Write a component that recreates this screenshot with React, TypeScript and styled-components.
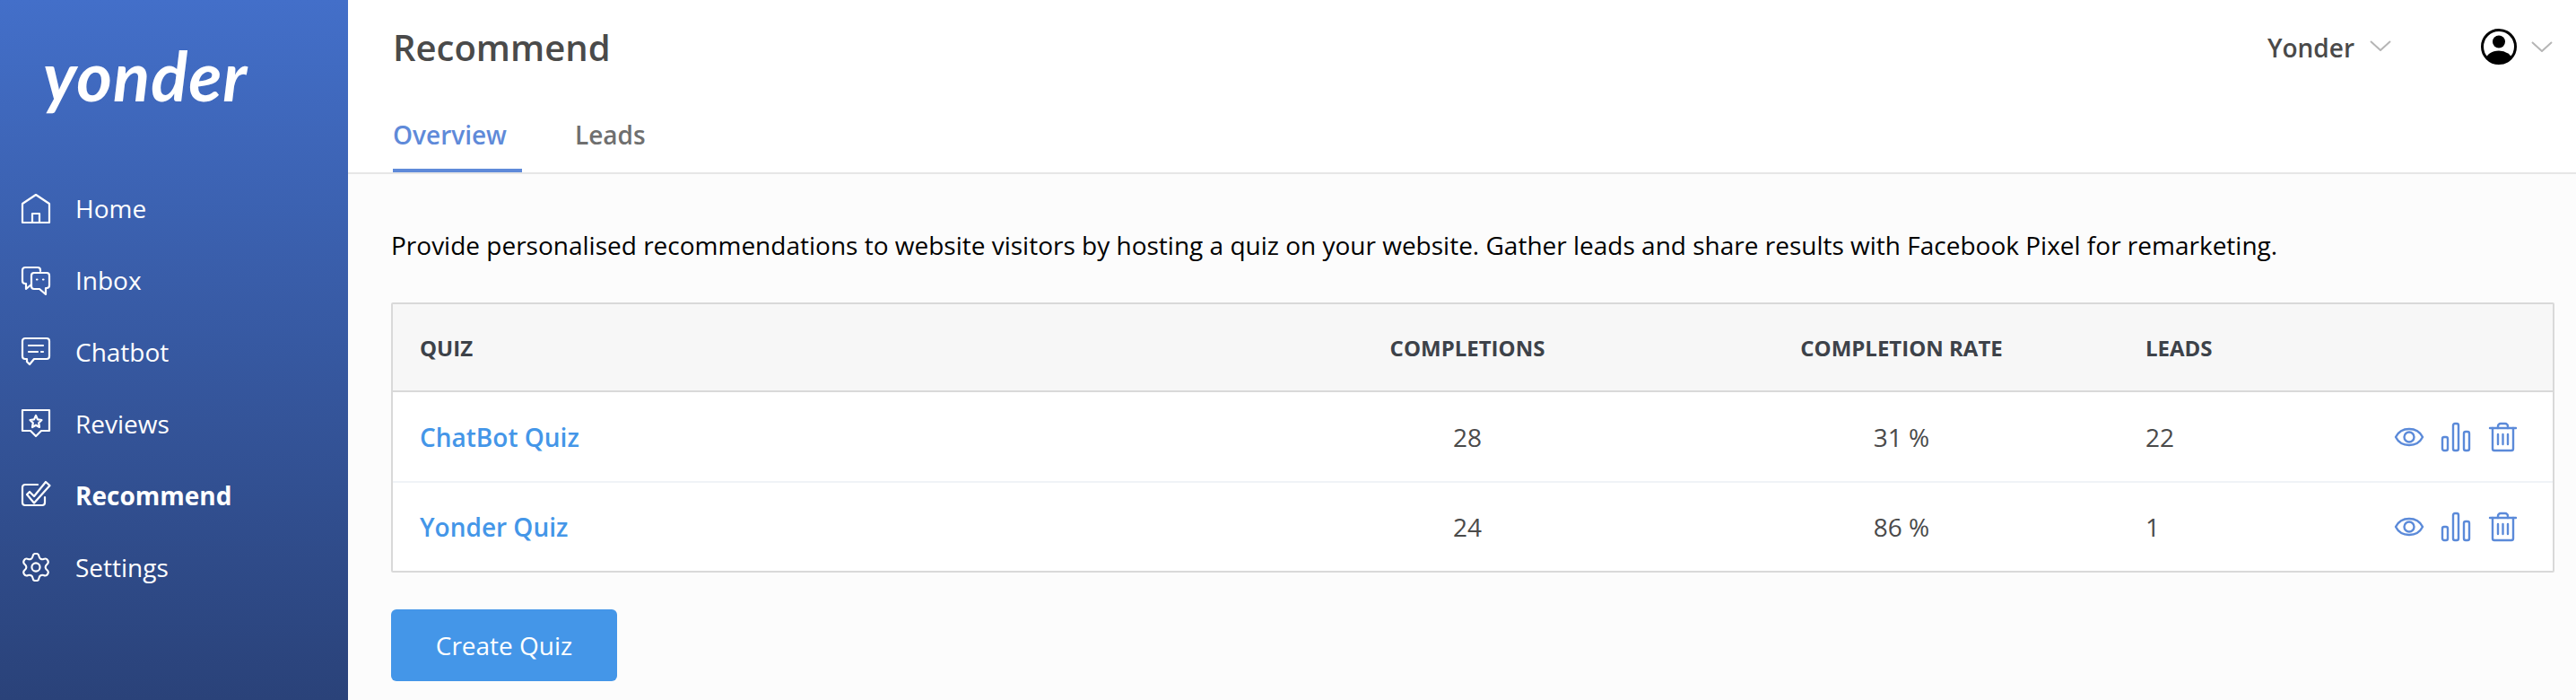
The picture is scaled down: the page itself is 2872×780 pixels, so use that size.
import React from 'react';
import styled, { createGlobalStyle } from 'styled-components';
import { Settings } from 'lucide-react';

const GlobalStyle = createGlobalStyle`
  html, body {
    margin: 0;
    padding: 0;
    font-family: "Open Sans", "Noto Sans", sans-serif;
    background: #fcfcfc;
  }
`;

const Layout = styled.div`
  display: flex;
  width: 100%;
  height: 100vh;
  overflow: hidden;
`;

const Sidebar = styled.aside`
  width: 388px;
  flex-shrink: 0;
  display: flex;
  flex-direction: column;
  background: linear-gradient(180deg, #436fc9 0%, #2a4279 100%);
`;

const Logo = styled.div`
  height: 192px;
  padding: 34px 0 0 48px;
  box-sizing: border-box;
  font-family: "Lato", "Open Sans", sans-serif;
  font-size: 76px;
  line-height: 100px;
  font-weight: 700;
  font-style: italic;
  letter-spacing: 1px;
  color: #fff;
`;

const Nav = styled.nav`
  display: flex;
  flex-direction: column;
`;

const NavItem = styled.a<{ $active?: boolean }>`
  height: 80px;
  display: flex;
  align-items: center;
  gap: 28px;
  padding-left: 24px;
  font-size: 28px;
  font-weight: ${(p) => (p.$active ? 700 : 400)};
  color: #fff;
`;

const NavIcon = styled.svg`
  width: 32px;
  height: 32px;
  flex-shrink: 0;
  fill: none;
  stroke: #fff;
  stroke-width: 2.2;
  stroke-linejoin: round;
  stroke-linecap: round;
  overflow: visible;
`;

const Main = styled.main`
  flex: 1;
  min-width: 0;
  display: flex;
  flex-direction: column;
`;

const Header = styled.header`
  height: 194px;
  box-sizing: border-box;
  background: #fff;
  border-bottom: 2px solid #e6e6e6;
  display: flex;
  flex-direction: column;
  justify-content: space-between;
`;

const TopRow = styled.div`
  display: flex;
  align-items: flex-start;
  justify-content: space-between;
  padding: 26px 26px 0 50px;
`;

const Title = styled.h1`
  margin: 0;
  font-size: 40px;
  line-height: 54px;
  font-weight: 600;
  color: #4a4a4a;
`;

const HeaderTools = styled.div`
  display: flex;
  align-items: center;
  height: 54px;
  margin-top: -1px;
`;

const OrgName = styled.span`
  font-size: 28px;
  font-weight: 600;
  color: #4a4a4a;
  margin-right: 17px;
  padding-top: 2px;
`;

const Chevron = styled.svg`
  width: 24px;
  height: 12px;
  fill: none;
  stroke: #b5b5b5;
  stroke-width: 2;
`;

const OrgChevron = styled(Chevron)`
  margin-right: 100px;
  margin-top: -2px;
`;

const UserIcon = styled.svg`
  width: 40px;
  height: 40px;
  margin-right: 16px;
`;

const Tabs = styled.div`
  display: flex;
  padding-left: 50px;
`;

const Tab = styled.a<{ $active?: boolean }>`
  height: 68px;
  box-sizing: border-box;
  padding: 6px 17px 0 0;
  margin-right: 43px;
  font-size: 28px;
  line-height: 40px;
  font-weight: 600;
  color: ${(p) => (p.$active ? '#5f8ad9' : '#6f6f6f')};
  border-bottom: 4px solid ${(p) => (p.$active ? '#5f8ad9' : 'transparent')};

  &:first-child {
    margin-right: 59px;
  }
`;

const Content = styled.div`
  flex: 1;
  padding: 60px 24px 0 48px;
  background: #fcfcfc;
`;

const Description = styled.p`
  margin: 0 0 45px;
  font-size: 28px;
  line-height: 38px;
  color: #000;
  white-space: nowrap;
`;

const Table = styled.div`
  border: 2px solid #d9d9d9;
  border-radius: 2px;
  background: #fff;
`;

const columns = '942px 512px 456px 118px 1fr';

const HeadRow = styled.div`
  display: grid;
  grid-template-columns: ${columns};
  align-items: center;
  box-sizing: border-box;
  height: 98px;
  background: #f7f7f7;
  border-bottom: 2px solid #d9d9d9;
  font-size: 24px;
  font-weight: 700;
  color: #3d4249;
  text-transform: uppercase;
`;

const Row = styled.div`
  display: grid;
  grid-template-columns: ${columns};
  align-items: center;
  box-sizing: border-box;
  height: 99px;
  font-size: 28px;
  color: #4a4a4a;

  & + & {
    border-top: 2px solid #f0f3f7;
    height: 100px;
  }
`;

const Cell = styled.div<{ $first?: boolean }>`
  text-align: ${(p) => (p.$first ? 'left' : 'center')};
  padding-left: ${(p) => (p.$first ? '30px' : '0')};
  white-space: nowrap;
`;

const LeadsCell = styled.div`
  padding-left: 44px;
  white-space: nowrap;
`;

const QuizLink = styled.a`
  font-weight: 600;
  color: #4496e8;
`;

const Actions = styled.div`
  display: flex;
  justify-content: flex-end;
  align-items: center;
  gap: 20px;
  padding-right: 40px;
`;

const ActionIcon = styled.svg`
  width: 32px;
  height: 32px;
  fill: none;
  stroke: #5b8ad9;
  stroke-width: 2.4;
  stroke-linecap: round;
  stroke-linejoin: round;
  overflow: visible;
`;

const CreateButton = styled.button`
  display: block;
  margin-top: 41px;
  width: 252px;
  height: 80px;
  border: 0;
  border-radius: 6px;
  background: #4496e8;
  color: #fff;
  font-family: inherit;
  font-size: 28px;
`;

const navItems = [
  {
    label: 'Home',
    icon: (
      <NavIcon viewBox="0 0 32 32">
        <path d="M1 11 L16 1 L31 11 V32 H1 Z" />
        <path d="M12 32 V22 H20 V32" />
      </NavIcon>
    ),
  },
  {
    label: 'Inbox',
    icon: (
      <NavIcon viewBox="0 0 32 32">
        <path d="M21 6 V5 a3 3 0 0 0 -3 -3 H4 a3 3 0 0 0 -3 3 v12 a3 3 0 0 0 3 3 h1 v6 l6 -5" />
        <path d="M14 8 H28 a3 3 0 0 1 3 3 v11 a3 3 0 0 1 -3 3 h-1 v7 l-7 -6 h-6 a3 3 0 0 1 -3 -3 V11 a3 3 0 0 1 3 -3 Z" />
        <path d="M17 15.5 h.5 M24 15.5 h.5" />
      </NavIcon>
    ),
  },
  {
    label: 'Chatbot',
    icon: (
      <NavIcon viewBox="0 0 32 32">
        <path d="M4 1 H28 a3 3 0 0 1 3 3 V21 a3 3 0 0 1 -3 3 H14 L9 30 L6 27 V24 H4 a3 3 0 0 1 -3 -3 V4 a3 3 0 0 1 3 -3 Z" />
        <path d="M8 9 H24 M8 16 H18 M22 16 H24" />
      </NavIcon>
    ),
  },
  {
    label: 'Reviews',
    icon: (
      <NavIcon viewBox="0 0 32 32">
        <path d="M1 1 H31 V24 H22 L16 30 L10 24 H1 Z" />
        <path d="M16 7 L18 11.4 L22.5 12 L19.2 15.2 L20 20 L16 17.7 L12 20 L12.8 15.2 L9.5 12 L14 11.4 Z" />
      </NavIcon>
    ),
  },
  {
    label: 'Recommend',
    active: true,
    icon: (
      <NavIcon viewBox="0 0 32 32">
        <path d="M18 4 H4 a3 3 0 0 0 -3 3 V24 a3 3 0 0 0 3 3 H23 a3 3 0 0 0 3 -3 V18" />
        <path d="M6 15 L9 12 L14 17 L27 1 L31.5 5 L14 24.5 Z" />
      </NavIcon>
    ),
  },
  { label: 'Settings', icon: <Settings size={32} viewBox="1.5 1.5 21 21" strokeWidth={1.4} color="#fff" /> },
];

const quizzes = [
  { name: 'ChatBot Quiz', completions: 28, rate: '31 %', leads: 22 },
  { name: 'Yonder Quiz', completions: 24, rate: '86 %', leads: 1 },
];

function App() {
  return (
    <Layout>
      <GlobalStyle />
      <Sidebar>
        <Logo>yonder</Logo>
        <Nav>
          {navItems.map((item) => (
            <NavItem key={item.label} $active={item.active}>
              {item.icon}
              {item.label}
            </NavItem>
          ))}
        </Nav>
      </Sidebar>
      <Main>
        <Header>
          <TopRow>
            <Title>Recommend</Title>
            <HeaderTools>
              <OrgName>Yonder</OrgName>
              <OrgChevron viewBox="0 0 24 12">
                <path d="M1 1 L12 11 L23 1" />
              </OrgChevron>
              <UserIcon viewBox="0 0 40 40">
                <clipPath id="user-clip">
                  <circle cx="20" cy="20" r="19" />
                </clipPath>
                <circle cx="20" cy="14.5" r="7" fill="#000" />
                <ellipse cx="20" cy="35" rx="14.5" ry="10.5" fill="#000" clipPath="url(#user-clip)" />
                <circle cx="20" cy="20" r="18.5" fill="none" stroke="#000" strokeWidth="3" />
              </UserIcon>
              <Chevron viewBox="0 0 24 12">
                <path d="M1 1 L12 11 L23 1" />
              </Chevron>
            </HeaderTools>
          </TopRow>
          <Tabs>
            <Tab $active>Overview</Tab>
            <Tab>Leads</Tab>
          </Tabs>
        </Header>
        <Content>
          <Description>
            Provide personalised recommendations to website visitors by hosting a quiz on your website. Gather leads and
            share results with Facebook Pixel for remarketing.
          </Description>
          <Table>
            <HeadRow>
              <Cell $first>Quiz</Cell>
              <Cell>Completions</Cell>
              <Cell>Completion rate</Cell>
              <LeadsCell>Leads</LeadsCell>
              <div />
            </HeadRow>
            {quizzes.map((quiz) => (
              <Row key={quiz.name}>
                <Cell $first>
                  <QuizLink>{quiz.name}</QuizLink>
                </Cell>
                <Cell>{quiz.completions}</Cell>
                <Cell>{quiz.rate}</Cell>
                <LeadsCell>{quiz.leads}</LeadsCell>
                <Actions>
                  <ActionIcon viewBox="0 0 32 32">
                    <path d="M1 16 C7 4, 25 4, 31 16 C25 28, 7 28, 1 16 Z" />
                    <circle cx="16" cy="16" r="5.5" />
                  </ActionIcon>
                  <ActionIcon viewBox="0 0 32 32">
                    <rect x="1" y="16" width="6" height="15" rx="2" />
                    <rect x="13" y="1" width="6" height="30" rx="2" />
                    <rect x="25" y="10" width="6" height="21" rx="2" />
                  </ActionIcon>
                  <ActionIcon viewBox="0 0 32 32">
                    <path d="M2 6 H31" />
                    <path d="M11 6 V4 a3 3 0 0 1 3 -3 H19 a3 3 0 0 1 3 3 V6" />
                    <path d="M5 6 V29 a2 2 0 0 0 2 2 H26 a2 2 0 0 0 2 -2 V6" />
                    <path d="M11 13 V24 M16.5 13 V24 M22 13 V24" />
                  </ActionIcon>
                </Actions>
              </Row>
            ))}
          </Table>
          <CreateButton>Create Quiz</CreateButton>
        </Content>
      </Main>
    </Layout>
  );
}

export default App;
